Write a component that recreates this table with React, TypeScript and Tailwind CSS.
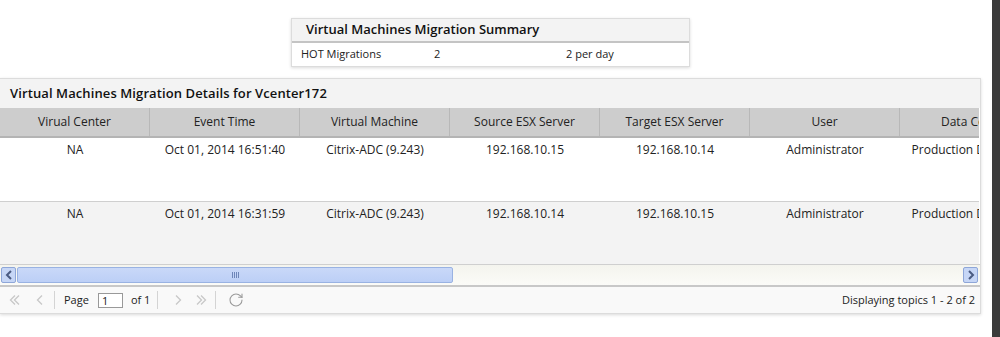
import { RotateCw } from "lucide-react";

const columns = [
  "Virual Center",
  "Event Time",
  "Virtual Machine",
  "Source ESX Server",
  "Target ESX Server",
  "User",
  "Data Center",
];

const rows = [
  ["NA", "Oct 01, 2014 16:51:40", "Citrix-ADC (9.243)", "192.168.10.15", "192.168.10.14", "Administrator", "Production Datacenter"],
  ["NA", "Oct 01, 2014 16:31:59", "Citrix-ADC (9.243)", "192.168.10.14", "192.168.10.15", "Administrator", "Production Datacenter"],
];

function Chevron({ dir, double }: { dir: "left" | "right"; double?: boolean }) {
  const flip = dir === "left" ? "scale(-1,1) translate(-14,0)" : undefined;
  return (
    <svg width="14" height="14" viewBox="0 0 14 14" fill="none">
      <g transform={flip} stroke="#c8c8c8" strokeWidth="1.3">
        {double ? (
          <>
            <path d="M3 2.5 L7.5 7 L3 11.5" />
            <path d="M7 2.5 L11.5 7 L7 11.5" />
          </>
        ) : (
          <path d="M5 2.5 L9.5 7 L5 11.5" />
        )}
      </g>
    </svg>
  );
}

function Sep() {
  return <div className="w-px h-[18px] bg-[#d4d4d4] mx-[7px]" />;
}

export default function App() {
  return (
    <div
      className="h-[337px] w-[1000px] bg-white flex overflow-hidden text-[#222]"
      style={{ fontFamily: '"Open Sans", "DejaVu Sans", sans-serif' }}
    >
      <div className="flex-1 flex flex-col">
        {/* Summary */}
        <div className="ml-[291px] mt-[18px] w-[399px] bg-white border border-[#dcdcdc] shadow-[0_1px_3px_rgba(0,0,0,0.15)]">
          <div className="h-[24px] bg-[#f3f3f3] border-b-2 border-[#c4c4c4] pl-[14px] flex items-center text-[13px] font-semibold text-[#111]">
            Virtual Machines Migration Summary
          </div>
          <div className="h-[23px] flex items-center text-[11px] text-[#222]">
            <span className="pl-[9px] w-[142px]">HOT Migrations</span>
            <span className="w-[132px]">2</span>
            <span>2 per day</span>
          </div>
        </div>

        {/* Details */}
        <div className="mt-[11px] w-[981px] border border-l-0 border-[#dcdcdc] shadow-[0_1px_3px_rgba(0,0,0,0.15)] bg-white">
          <div className="h-[29px] bg-[#f3f3f3] pl-[10px] flex items-center text-[13px] font-semibold text-[#111] tracking-[0.1px]">
            Virtual Machines Migration Details for Vcenter172
          </div>

          <div className="overflow-hidden w-[979px]">
            <div className="w-[1050px]">
              <div className="flex h-[30px] bg-[#cdcdcd] border-b-2 border-[#b4b4b4]">
                {columns.map((c) => (
                  <div
                    key={c}
                    className="w-[150px] shrink-0 border-r border-[#b8b8b8] flex items-center justify-center text-[12px] text-[#222] whitespace-nowrap"
                  >
                    {c}
                  </div>
                ))}
              </div>
              {rows.map((r, i) => (
                <div
                  key={i}
                  className={`flex h-[63px] ${i === 1 ? "bg-[#f3f3f3] border-t border-[#cfcfcf]" : "bg-white"}`}
                >
                  {r.map((v, j) => (
                    <div
                      key={j}
                      className="w-[150px] shrink-0 text-center pt-[3px] text-[12px] text-[#222] whitespace-nowrap overflow-hidden"
                    >
                      {v}
                    </div>
                  ))}
                </div>
              ))}
            </div>
          </div>

          {/* horizontal scrollbar */}
          <div className="h-[21px] flex items-center border-t border-[#cfcfcf] bg-gradient-to-b from-[#f4f4ee] to-[#fbfbf8]">
            <div className="w-[15px] h-[16px] ml-px bg-[#c6d6f6] border border-[#8ea6d8] rounded-[2px] flex items-center justify-center">
              <svg width="8" height="10" viewBox="0 0 8 10">
                <path d="M6 1 L2 5 L6 9" stroke="#4a5b82" strokeWidth="2" fill="none" />
              </svg>
            </div>
            <div className="w-[436px] h-[16px] ml-px bg-gradient-to-b from-[#c9d8f8] to-[#bccff6] border border-[#99b2e2] rounded-[2px] flex items-center justify-center">
              <div className="flex gap-px">
                <div className="w-px h-[6px] bg-[#6e86b8]" />
                <div className="w-px h-[6px] bg-[#6e86b8]" />
                <div className="w-px h-[6px] bg-[#6e86b8]" />
                <div className="w-px h-[6px] bg-[#6e86b8]" />
              </div>
            </div>
            <div className="flex-1" />
            <div className="w-[15px] h-[16px] mr-[2px] bg-[#c6d6f6] border border-[#8ea6d8] rounded-[2px] flex items-center justify-center">
              <svg width="8" height="10" viewBox="0 0 8 10">
                <path d="M2 1 L6 5 L2 9" stroke="#4a5b82" strokeWidth="2" fill="none" />
              </svg>
            </div>
          </div>

          {/* paging toolbar */}
          <div className="h-[28px] border-t-2 border-[#c8c8c8] bg-[#f9f9f9] flex items-center text-[11px] text-[#222] pr-[5px]">
            <div className="flex items-center pl-[8px] gap-[11px]">
              <Chevron dir="left" double />
              <Chevron dir="left" />
            </div>
            <Sep />
            <span className="ml-[2px]">Page</span>
            <div className="ml-[9px] w-[25px] h-[15px] border border-[#999] bg-white pl-[3px] leading-[13px]">1</div>
            <span className="ml-[8px]">of 1</span>
            <Sep />
            <div className="flex items-center gap-[9px] ml-[6px]">
              <Chevron dir="right" />
              <Chevron dir="right" double />
            </div>
            <Sep />
            <RotateCw className="ml-[5px] w-[16px] h-[16px] text-[#9a9a9a]" strokeWidth={1.6} />
            <div className="flex-1" />
            <span>Displaying topics 1 - 2 of 2</span>
          </div>
        </div>
      </div>
      <div className="w-[8px] bg-[#3b3b3b]" />
    </div>
  );
}
